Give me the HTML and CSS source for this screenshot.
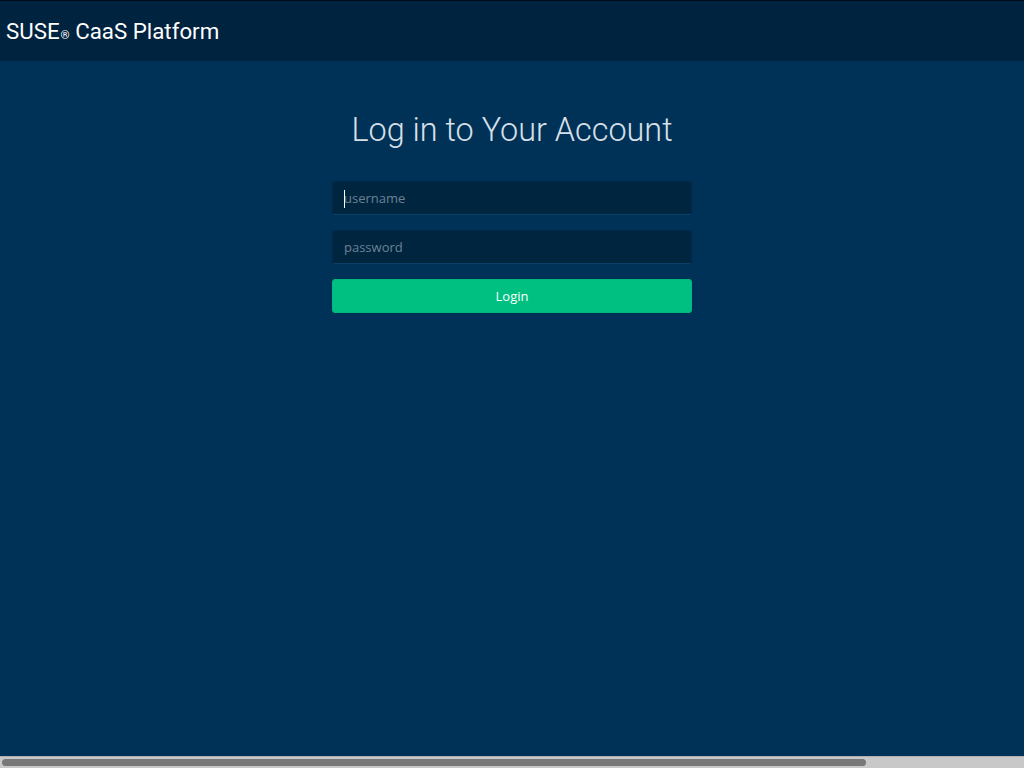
FILE: index.html
```html
<!DOCTYPE html>
<html lang="en">
<head>
<meta charset="utf-8">
<title>SUSE CaaS Platform</title>
<link rel="stylesheet" href="styles.css">
</head>
<body>
<div class="page">
  <header class="topbar">
    <span class="brand">SUSE<span class="reg">®</span> CaaS Platform</span>
  </header>
  <main class="content">
    <h1 class="title">Log in to Your Account</h1>
    <form class="login">
      <div class="field"><span class="caret"></span><span class="ph">username</span></div>
      <div class="field"><span class="ph">password</span></div>
      <button type="button" class="btn">Login</button>
    </form>
  </main>
  <div class="hscroll"><div class="thumb"></div></div>
</div>
</body>
</html>
```

FILE: styles.css
```css
html {
  background: #003157;
}
body {
  margin: 0;
  font-family: Roboto, "Liberation Sans", sans-serif;
  overflow: hidden;
}
.page {
  height: 768px;
  display: flex;
  flex-direction: column;
  background: #003157;
}
.topbar {
  height: 60px;
  flex: none;
  background: #00233f;
  border-top: 1px solid #000d18;
  display: flex;
  align-items: center;
  padding-left: 6px;
}
.brand {
  color: #ffffff;
  font-size: 22.3px;
  font-weight: 400;
}
.reg {
  font-size: 11.5px;
  margin-left: 1px;
}
.content {
  flex: 1;
  display: flex;
  flex-direction: column;
  align-items: center;
}
.title {
  margin: 50px 0 0;
  font-weight: 300;
  font-size: 32.4px;
  color: #d7e0e8;
  line-height: 38px;
}
.login {
  margin-top: 32px;
  width: 360px;
  display: flex;
  flex-direction: column;
  gap: 15px;
}
.field {
  height: 34px;
  box-sizing: border-box;
  background: #00253f;
  border: 1px solid #00284a;
  border-bottom-color: #0a3f6a;
  border-radius: 3px;
  display: flex;
  align-items: center;
  padding-left: 11px;
  font-family: "Open Sans", "Noto Sans", sans-serif;
  font-size: 13px;
  position: relative;
}
.caret {
  position: absolute;
  left: 11px;
  top: 8px;
  width: 1px;
  height: 18px;
  background: #ffffff;
}
.ph {
  color: #6c8196;
}
.btn {
  height: 34px;
  border: 1px solid #03b87c;
  border-radius: 3px;
  background: #00c081;
  color: #ffffff;
  font-family: "Open Sans", "Noto Sans", sans-serif;
  font-size: 13px;
  cursor: pointer;
  padding: 0;
}
.hscroll {
  flex: none;
  height: 12px;
  box-sizing: border-box;
  background: #c8c8c8;
  border-top: 1px solid #b0b0b0;
  padding: 2px 158px 2px 2px;
  display: flex;
}
.thumb {
  flex: 1;
  background: #787878;
  border-radius: 4px;
}
```
